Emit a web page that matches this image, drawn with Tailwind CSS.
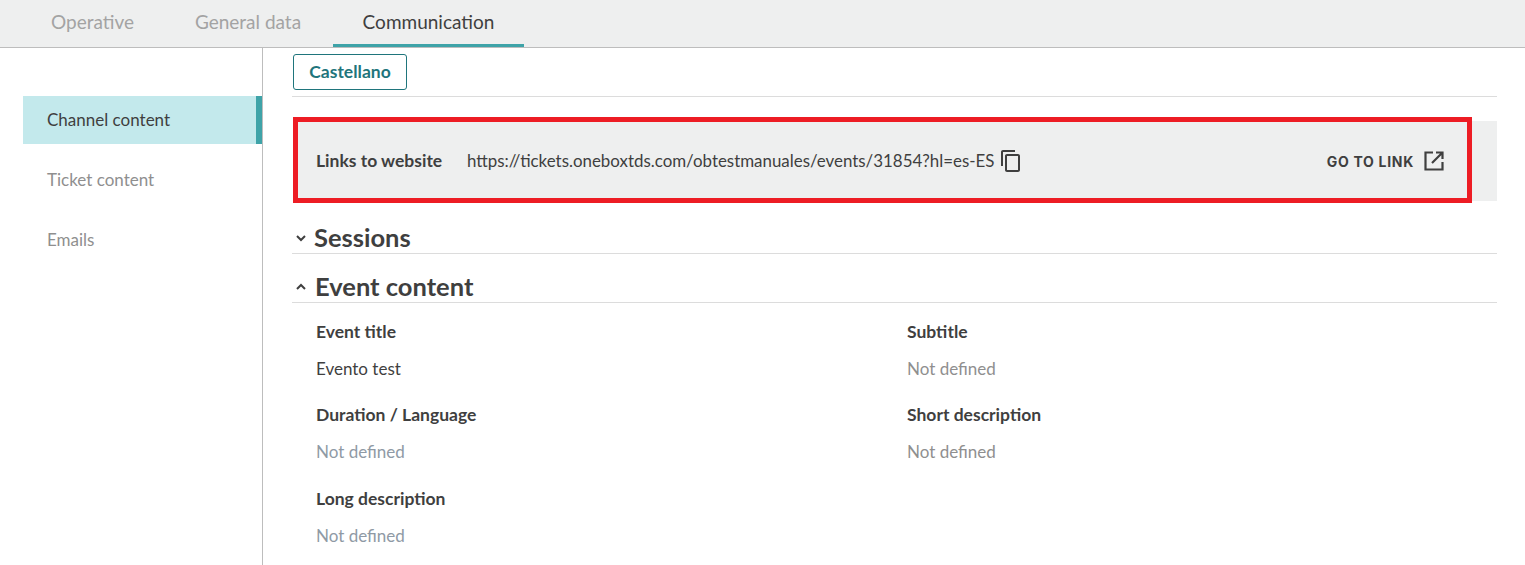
<!DOCTYPE html>
<html lang="en">
<head>
    <meta charset="UTF-8">
    <title>Event communication</title>
    <script src="https://cdn.jsdelivr.net/npm/@tailwindcss/browser@4"></script>
</head>
<body class="h-[565px] w-[1525px] overflow-hidden bg-white font-['Lato','Noto_Sans',sans-serif] text-[#3f3f3f]">
    <!-- Tabs -->
    <div class="flex h-12 items-stretch border-b border-[#bdbdbd] bg-[#eeefef] pl-[22px] text-[19px]">
        <div class="flex h-[47px] w-[141px] items-center justify-center pb-[3px] text-[#a3a3a3]">Operative</div>
        <div class="flex h-[47px] w-[170px] items-center justify-center pb-[3px] text-[#a3a3a3]">General data</div>
        <div class="flex h-[47px] w-[191px] items-center justify-center border-b-[3px] border-[#3ea3a8] pb-0">Communication</div>
    </div>

    <div class="flex h-[517px]">
        <!-- Sidebar -->
        <div class="w-[263px] shrink-0 border-r border-[#bdbdbd] pl-[23px] pt-12 text-[17px]">
            <div class="flex h-12 items-center border-r-[6px] border-[#3ea3a8] bg-[#c3e9ec] pb-px pl-6">Channel content</div>
            <div class="mt-3 flex h-12 items-center pb-px pl-6 text-[#8f8f8f]">Ticket content</div>
            <div class="mt-3 flex h-12 items-center pb-px pl-6 text-[#8f8f8f]">Emails</div>
        </div>

        <!-- Main -->
        <div class="relative w-[1234px] pl-[29px]">
            <div class="flex h-[49px] items-start border-b border-[#dcdcdc] pt-[6px]">
                <button class="ml-px h-9 w-[114px] rounded-[3px] border border-[#1f757c] text-[17.500px] font-bold text-[#1f757c]">Castellano</button>
            </div>

            <!-- Links box -->
            <div class="ml-px mt-6 flex h-20 items-center bg-[#eeefef] pl-[23px] pr-[51px] text-[16.900px]">
                <span class="w-[151px] text-[17.500px] font-bold">Links to website</span>
                <span>https://tickets.oneboxtds.com/obtestmanuales/events/31854?hl=es-ES</span>
                <svg class="ml-[5px] h-6 w-6" viewBox="0 0 24 24" fill="currentColor"><path d="M16 1H4c-1.100 0-2 .9-2 2v14h2V3h12V1zm3 4H8c-1.100 0-2 .9-2 2v14c0 1.100.9 2 2 2h11c1.100 0 2-.9 2-2V7c0-1.100-.9-2-2-2zm0 16H8V7h11v14z"/></svg>
                <span class="ml-auto font-['Inter',sans-serif] text-[14px] font-bold tracking-[0.7px]">GO TO LINK</span>
                <svg class="ml-[8px] h-6 w-6" viewBox="0 0 24 24" fill="none" stroke="currentColor" stroke-width="2.200"><path d="M11 3.500H3.500v17h17V13M14 3.500h6.500V10M20.500 3.500 10 14"/></svg>
            </div>

            <!-- Sessions -->
            <div class="mt-[21px] flex h-[32px] items-center border-b border-[#dcdcdc]">
                <svg class="ml-[2px] h-3.5 w-3.5" viewBox="0 0 14 14" fill="none" stroke="currentColor" stroke-width="2"><path d="m3 5 4 4 4-4"/></svg>
                <h2 class="ml-[6px] text-[25.500px] font-bold">Sessions</h2>
            </div>

            <!-- Event content -->
            <div class="mt-[17px] flex h-[32px] items-center border-b border-[#dcdcdc]">
                <svg class="ml-[2px] h-3.5 w-3.5" viewBox="0 0 14 14" fill="none" stroke="currentColor" stroke-width="2"><path d="m3 9 4-4 4 4"/></svg>
                <h2 class="ml-[7px] text-[25.500px] font-bold">Event content</h2>
            </div>

            <div class="grid grid-cols-[591px_1fr] pl-[24px] pt-[16px] text-[17px]">
                <div class="h-[83px]"><div class="text-[17.500px] font-bold">Event title</div><div class="mt-[11px]">Evento test</div></div>
                <div class="h-[83px]"><div class="text-[17.500px] font-bold">Subtitle</div><div class="mt-[11px] text-[#8f8f8f]">Not defined</div></div>
                <div class="h-[84px]"><div class="text-[17.500px] font-bold">Duration / Language</div><div class="mt-[11px] text-[#8f9aa5]">Not defined</div></div>
                <div class="h-[84px]"><div class="text-[17.500px] font-bold">Short description</div><div class="mt-[11px] text-[#8f8f8f]">Not defined</div></div>
                <div><div class="text-[17.500px] font-bold">Long description</div><div class="mt-[11px] text-[#8f9aa5]">Not defined</div></div>
            </div>

            <!-- Red highlight drawn over the screenshot -->
            <div class="absolute left-[30px] top-[69px] h-[86px] w-[1179px] border-[5px] border-[#ed1c24]"></div>
        </div>
    </div>
</body>
</html>
